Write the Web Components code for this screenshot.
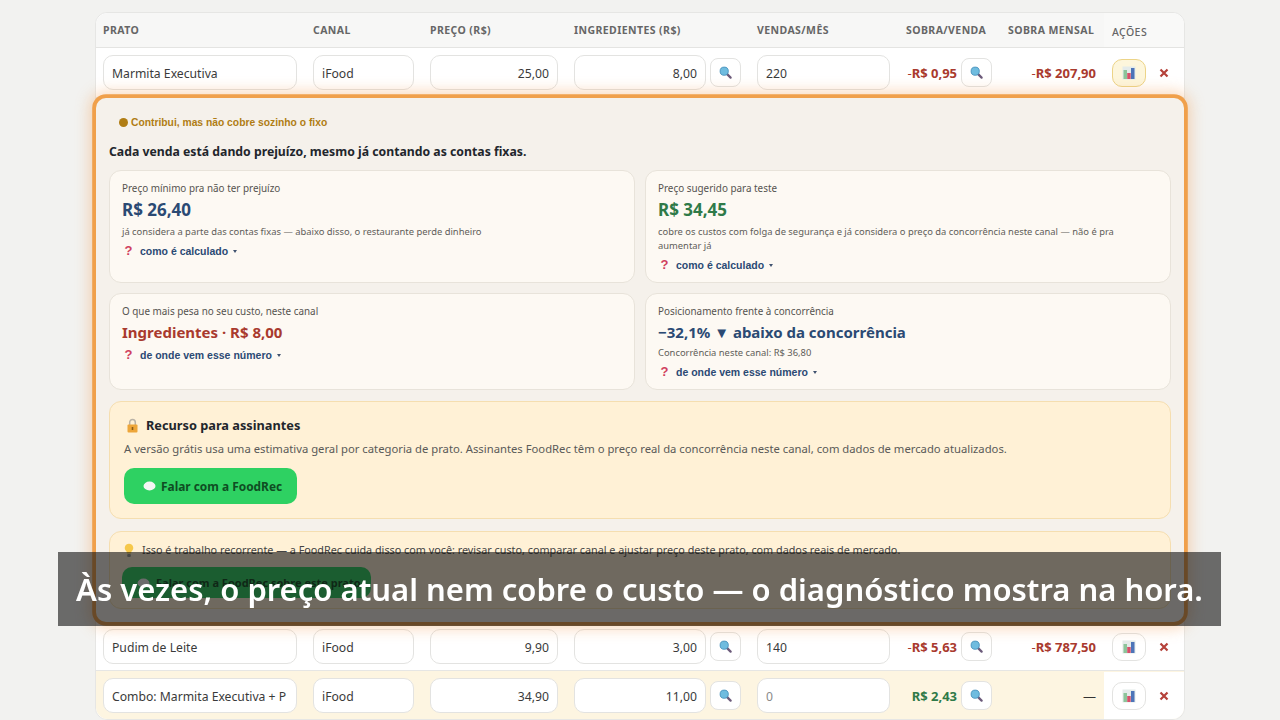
<!DOCTYPE html>
<html lang="pt-BR">
<head>
<meta charset="utf-8">
<title>FoodRec</title>
<style>
    html, body { margin: 0; height: 720px; overflow: hidden; background: #f2f2f0; }
    body { font-family: "Noto Sans", "Open Sans", sans-serif; color: #2b2b2b; }
</style>
</head>
<body>
<food-page>
    <food-table>
        <food-header></food-header>
        <food-row prato="Marmita Executiva" preco="25,00" ingredientes="8,00" vendas="220" sobra="-|R$ 0,95" mensal="-|R$ 207,90" ativo></food-row>
        <food-panel>
            <span slot="selo">Contribui, mas não cobre sozinho o fixo</span>
            <span slot="titulo">Cada venda está dando prejuízo, mesmo já contando as contas fixas.</span>
            <info-card grande rotulo="Preço mínimo pra não ter prejuízo" valor="R$ 26,40" cor="#2b4a73" ajuda="como é calculado">
                já considera a parte das contas fixas — abaixo disso, o restaurante perde dinheiro
            </info-card>
            <info-card grande rotulo="Preço sugerido para teste" valor="R$ 34,45" cor="#2f7a48" ajuda="como é calculado">
                cobre os custos com folga de segurança e já considera o preço da concorrência neste canal — não é pra aumentar já
            </info-card>
            <info-card rotulo="O que mais pesa no seu custo, neste canal" valor="Ingredientes · R$ 8,00" cor="#a93a2e" ajuda="de onde vem esse número"></info-card>
            <info-card rotulo="Posicionamento frente à concorrência" valor="−32,1% ▼ abaixo da concorrência" cor="#2b4a73" ajuda="de onde vem esse número">
                Concorrência neste canal: R$ 36,80
            </info-card>
            <promo-box slot="extras" titulo="Recurso para assinantes" botao="Falar com a FoodRec">
                A versão grátis usa uma estimativa geral por categoria de prato. Assinantes FoodRec têm o preço real da concorrência neste canal, com dados de mercado atualizados.
            </promo-box>
            <work-box slot="extras" botao="Falar com a FoodRec sobre este prato">
                Isso é trabalho recorrente — a FoodRec cuida disso com você: revisar custo, comparar canal e ajustar preço deste prato, com dados reais de mercado.
            </work-box>
        </food-panel>
        <food-row prato="Pudim de Leite" preco="9,90" ingredientes="3,00" vendas="140" sobra="-|R$ 5,63" mensal="-|R$ 787,50"></food-row>
        <food-row prato="Combo: Marmita Executiva + P" preco="34,90" ingredientes="11,00" vendas="0" sobra="|R$ 2,43" mensal="—" combo></food-row>
    </food-table>
    <food-caption>Às vezes, o preço atual nem cobre o custo — o diagnóstico mostra na hora.</food-caption>
</food-page>

<script>
// Icones desenhados a mao, parecidos com os emojis do original
const ICONE_LUPA = `<svg width="13" height="13" viewBox="0 0 14 14"><path d="M8.5 8.5 L12.5 12.5" stroke="#6b5a7a" stroke-width="2.4" stroke-linecap="round"/><circle cx="5.6" cy="5.6" r="4.4" fill="#6fbcdf" stroke="#4a93bd" stroke-width="1"/></svg>`;
const ICONE_GRAFICO = `<svg width="14" height="14" viewBox="0 0 14 14"><rect x="0.5" y="0.5" width="13" height="13" fill="#e4ebea"/><rect x="1.5" y="4" width="3.5" height="9" fill="#8cc49a"/><rect x="5.2" y="7" width="3.5" height="6" fill="#d8506a"/><rect x="9" y="2" width="3.5" height="11" fill="#4d74b8"/></svg>`;
const ICONE_X = `<svg width="10" height="10" viewBox="0 0 10 10"><path d="M1.5 1.5 L8.5 8.5 M8.5 1.5 L1.5 8.5" stroke="#b5413a" stroke-width="2.2"/></svg>`;
const ICONE_CADEADO = `<svg width="11" height="15" viewBox="0 0 11 15"><path d="M2.7 7 V4.3 a2.8 2.8 0 0 1 5.6 0 V7" fill="none" stroke="#b9b2a6" stroke-width="1.5"/><rect x="0.5" y="6.5" width="10" height="8" rx="1" fill="#eda63a"/><rect x="4.7" y="9" width="1.6" height="3" fill="#8a5a16"/></svg>`;
const ICONE_LAMPADA = `<svg width="10" height="15" viewBox="0 0 10 15"><path d="M5 .8 a4.2 4.2 0 0 1 2.6 7.5 L7 10.5 H3 L2.4 8.3 A4.2 4.2 0 0 1 5 .8z" fill="#f6c84a"/><rect x="3.2" y="11" width="3.6" height="3" rx="1" fill="#9a9a92"/></svg>`;
const ICONE_BALAO = `<svg width="13" height="10" viewBox="0 0 13 10"><ellipse cx="6.5" cy="5" rx="6" ry="4.4" fill="#f4f6f4"/></svg>`;

const COLUNAS = "194px 101px 128px 167px 133px 86px 88px 1fr";

// Campo que parece um input
class CampoTexto extends HTMLElement {
    constructor() {
        super();
        this.attachShadow({ mode: "open" });
        this.shadowRoot.innerHTML = `
            <style>
                :host { display: block; min-width: 0; flex: 1; }
                .campo {
                    height: 33px;
                    padding: 0 8px;
                    background: #fff;
                    border: 1px solid #e3e3e1;
                    border-radius: 10px;
                    font-size: 12.2px;
                    color: #3a3a3a;
                }
                .dentro { height: 33px; line-height: 35px; white-space: nowrap; overflow: hidden; }
                :host([direita]) .campo { text-align: right; }
                :host([vazio]) .campo { color: #8a8a8a; }
            </style>
            <div class="campo"><div class="dentro"><slot></slot></div></div>
        `;
    }
}

class BotaoIcone extends HTMLElement {
    constructor() {
        super();
        this.attachShadow({ mode: "open" });
        this.shadowRoot.innerHTML = `
            <style>
                :host { display: flex; flex: none; }
                .btn {
                    width: 29px;
                    height: 27px;
                    display: flex;
                    align-items: center;
                    justify-content: center;
                    background: #fff;
                    border: 1px solid #e3e3e1;
                    border-radius: 8px;
                }
                :host([largo]) .btn { width: 32px; height: 26px; border-radius: 10px; }
                :host([ativo]) .btn { background: #fdf6dc; border-color: #ecd488; }
            </style>
            <div class="btn"><slot></slot></div>
        `;
    }
}

class FoodHeader extends HTMLElement {
    constructor() {
        super();
        this.attachShadow({ mode: "open" });
        this.shadowRoot.innerHTML = `
            <style>
                :host {
                    display: grid;
                    grid-template-columns: ${COLUNAS};
                    column-gap: 16px;
                    padding-left: 7px;
                    height: 34px;
                    align-items: center;
                    background: #f7f7f6;
                    border-bottom: 1px solid #e4e4e2;
                    font-size: 10.5px;
                    font-weight: 700;
                    letter-spacing: .42px;
                    color: #666;
                    white-space: nowrap;
                    border-radius: 12px 12px 0 0;
                }
                .acoes {
                    font-weight: 500;
                    align-self: stretch;
                    display: flex;
                    align-items: center;
                    padding: 3px 0 0 8px;
                    margin-left: -8px;
                    background: #f9f9f8;
                    border-top-right-radius: 12px;
                }
            </style>
            <div>PRATO</div><div>CANAL</div><div>PREÇO (R$)</div><div>INGREDIENTES (R$)</div>
            <div>VENDAS/MÊS</div><div>SOBRA/VENDA</div><div>SOBRA MENSAL</div><div class="acoes">AÇÕES</div>
        `;
    }
}

class FoodRow extends HTMLElement {
    constructor() {
        super();
        this.attachShadow({ mode: "open" });
        this.shadowRoot.innerHTML = `
            <style>
                :host {
                    display: grid;
                    grid-template-columns: ${COLUNAS};
                    column-gap: 16px;
                    padding-left: 7px;
                    height: 47px;
                    align-items: center;
                    background: #fff;
                    border-bottom: 1px solid #e6e6e4;
                }
                :host([ativo]) { padding: 1px 0 1px 7px; }
                :host([combo]) { background: #fdf5e1; border-bottom: 0; padding-top: 1px; border-radius: 0 0 12px 12px; }
                .par { display: flex; align-items: center; gap: 4px; min-width: 0; }
                .valor { font-size: 13px; font-weight: 700; white-space: nowrap; flex: 1; text-align: right; color: #a93a2e; }
                .valor.positivo { color: #2f7a48; }
                .valor i { font-style: normal; font-weight: 400; }
                .acoes {
                    display: flex;
                    align-items: center;
                    gap: 13px;
                    background: #fff;
                    align-self: stretch;
                    margin-left: -8px;
                    padding-left: 8px;
                    border-bottom-right-radius: 12px;
                }
                .x { display: flex; }
            </style>
            <campo-texto id="prato"></campo-texto>
            <campo-texto>iFood</campo-texto>
            <campo-texto id="preco" direita></campo-texto>
            <div class="par"><campo-texto id="ing" direita></campo-texto><botao-icone>${ICONE_LUPA}</botao-icone></div>
            <campo-texto id="vendas"></campo-texto>
            <div class="par"><div class="valor" id="sobra"></div><botao-icone>${ICONE_LUPA}</botao-icone></div>
            <div class="valor" id="mensal"></div>
            <div class="acoes"><botao-icone largo id="graf">${ICONE_GRAFICO}</botao-icone><span class="x">${ICONE_X}</span></div>
        `;
    }

    connectedCallback() {
        const raiz = this.shadowRoot;
        raiz.querySelector("#prato").textContent = this.getAttribute("prato");
        raiz.querySelector("#preco").textContent = this.getAttribute("preco");
        raiz.querySelector("#ing").textContent = this.getAttribute("ingredientes");
        const vendas = raiz.querySelector("#vendas");
        vendas.textContent = this.getAttribute("vendas");
        if (this.getAttribute("vendas") === "0") vendas.setAttribute("vazio", "");
        this.preencherValor(raiz.querySelector("#sobra"), this.getAttribute("sobra"));
        this.preencherValor(raiz.querySelector("#mensal"), this.getAttribute("mensal"));
        if (this.hasAttribute("ativo")) raiz.querySelector("#graf").setAttribute("ativo", "");
    }

    // "-|R$ 0,95": o sinal fica mais fino que o numero
    preencherValor(el, texto) {
        if (texto === "—") {
            el.innerHTML = `<i style="color:#333">—</i>`;
            return;
        }
        const [sinal, numero] = texto.split("|");
        if (!sinal) el.classList.add("positivo");
        el.innerHTML = `<i>${sinal}</i>${numero}`;
    }
}

class FoodPanel extends HTMLElement {
    constructor() {
        super();
        this.attachShadow({ mode: "open" });
        this.shadowRoot.innerHTML = `
            <style>
                :host {
                    display: block;
                    position: relative;
                    z-index: 1;
                    margin: 0 0 1px;
                    height: 524px;
                    padding: 0 13px;
                    background: #f5f1eb;
                    border-radius: 10px;
                    box-shadow: 0 0 0 3.8px #f0a04b, 0 0 14px 7px rgba(243, 160, 90, .38);
                }
                .selo {
                    display: flex;
                    align-items: center;
                    gap: 3px;
                    padding: 18px 0 0 10px;
                    font: 700 10.3px "Liberation Sans", sans-serif;
                    color: #b07d14;
                    line-height: 13px;
                }
                .selo::before { content: ""; width: 9px; height: 9px; border-radius: 50%; background: #b07d14; }
                .titulo { margin: 14px 0 9px; font-size: 12.25px; line-height: 18px; font-weight: 700; color: #22262c; }
                .grade { display: grid; grid-template-columns: 1fr 1fr; grid-template-rows: 113px 97px; gap: 10px; }
                .extras { display: flex; flex-direction: column; gap: 12px; margin-top: 11px; }
            </style>
            <div class="selo"><slot name="selo"></slot></div>
            <div class="titulo"><slot name="titulo"></slot></div>
            <div class="grade"><slot></slot></div>
            <div class="extras"><slot name="extras"></slot></div>
        `;
    }
}

class InfoCard extends HTMLElement {
    constructor() {
        super();
        this.attachShadow({ mode: "open" });
        this.shadowRoot.innerHTML = `
            <style>
                :host {
                    display: block;
                    box-sizing: border-box;
                    padding: 10px 12px;
                    background: #fdf9f3;
                    border: 1px solid #e8e3da;
                    border-radius: 12px;
                }
                .rotulo { font-size: 9.9px; line-height: 14px; color: #55534f; }
                .valor { font-size: 15px; line-height: 21px; margin-top: 4px; font-weight: 700; }
                :host([grande]) .valor { font-size: 17px; }
                .nota { font-size: 9.4px; line-height: 14px; color: #5f5d59; margin: 3px 0 2px; }
                :host([grande]) .nota { margin: 5px 0 0; }
                .ajuda {
                    display: flex;
                    align-items: center;
                    font: 700 10.5px/14px "Liberation Sans", sans-serif;
                    color: #2b4a73;
                    margin-top: 5px;
                }
                .q { color: #d0405e; font-size: 13px; width: 13px; margin-right: 5px; text-align: center; }
                .seta { margin-left: 5px; width: 0; height: 0; border: 2.5px solid transparent; border-top: 3px solid #40536f; border-bottom: 0; }
            </style>
            <div class="rotulo"></div>
            <div class="valor"></div>
            <div class="nota"><slot></slot></div>
            <div class="ajuda"><span class="q">?</span><span class="txt"></span><span class="seta"></span></div>
        `;
    }

    connectedCallback() {
        const raiz = this.shadowRoot;
        raiz.querySelector(".rotulo").textContent = this.getAttribute("rotulo");
        const valor = raiz.querySelector(".valor");
        valor.textContent = this.getAttribute("valor");
        valor.style.color = this.getAttribute("cor");
        raiz.querySelector(".txt").textContent = this.getAttribute("ajuda");
        if (!this.textContent.trim()) raiz.querySelector(".nota").style.display = "none";
    }
}

class PromoBox extends HTMLElement {
    constructor() {
        super();
        this.attachShadow({ mode: "open" });
        this.shadowRoot.innerHTML = `
            <style>
                :host {
                    display: block;
                    box-sizing: border-box;
                    height: 118px;
                    padding: 14px 14px;
                    background: #fff1d6;
                    border: 1px solid #f5deb0;
                    border-radius: 12px;
                }
                .titulo { display: flex; align-items: center; gap: 8px; font-size: 12.75px; line-height: 18px; font-weight: 700; color: #22262c; padding-left: 3px; }
                .texto { font-size: 11.27px; line-height: 16px; color: #5a5a58; margin-top: 7px; white-space: nowrap; }
                .botao {
                    display: inline-flex;
                    align-items: center;
                    gap: 5px;
                    height: 36px;
                    margin-top: 11px;
                    padding: 0 15px 0 19px;
                    background: #2ed162;
                    border-radius: 10px;
                    font-size: 11.9px;
                    font-weight: 700;
                    color: #0f4d22;
                }
            </style>
            <div class="titulo">${ICONE_CADEADO}<span id="t"></span></div>
            <div class="texto"><slot></slot></div>
            <div class="botao">${ICONE_BALAO}<span id="b"></span></div>
        `;
    }

    connectedCallback() {
        this.shadowRoot.querySelector("#t").textContent = this.getAttribute("titulo");
        this.shadowRoot.querySelector("#b").textContent = this.getAttribute("botao");
    }
}

class WorkBox extends HTMLElement {
    constructor() {
        super();
        this.attachShadow({ mode: "open" });
        this.shadowRoot.innerHTML = `
            <style>
                :host {
                    display: block;
                    box-sizing: border-box;
                    height: 78px;
                    padding: 10px 12px;
                    background: #fff1d6;
                    border: 1px solid #f5deb0;
                    border-radius: 12px;
                }
                .texto { display: flex; align-items: center; gap: 8px; font-size: 10.8px; line-height: 16px; color: #444; white-space: nowrap; padding-left: 2px; }
                .botao {
                    display: inline-flex;
                    align-items: center;
                    gap: 6px;
                    height: 31px;
                    margin-top: 9px;
                    padding: 0 10px 0 15px;
                    background: #2ed162;
                    border-radius: 10px;
                    font-size: 11px;
                    font-weight: 700;
                    color: #0f4d22;
                }
            </style>
            <div class="texto">${ICONE_LAMPADA}<span><slot></slot></span></div>
            <div class="botao">${ICONE_BALAO}<span id="b"></span></div>
        `;
    }

    connectedCallback() {
        this.shadowRoot.querySelector("#b").textContent = this.getAttribute("botao");
    }
}

class FoodTable extends HTMLElement {
    constructor() {
        super();
        this.attachShadow({ mode: "open" });
        this.shadowRoot.innerHTML = `
            <style>
                :host {
                    display: block;
                    background: #fff;
                    border: 1px solid #e6e6e4;
                    border-radius: 12px;
                }
            </style>
            <slot></slot>
        `;
    }
}

class FoodPage extends HTMLElement {
    constructor() {
        super();
        this.attachShadow({ mode: "open" });
        this.shadowRoot.innerHTML = `
            <style>
                :host { display: block; padding: 12px 95px 0; }
            </style>
            <slot></slot>
        `;
    }
}

class FoodCaption extends HTMLElement {
    constructor() {
        super();
        this.attachShadow({ mode: "open" });
        this.shadowRoot.innerHTML = `
            <style>
                :host {
                    position: fixed;
                    z-index: 5;
                    left: 58px;
                    top: 552px;
                    width: 1163px;
                    height: 74px;
                    display: flex;
                    align-items: center;
                    justify-content: center;
                    background: rgba(15, 15, 15, .6);
                    color: #fff;
                    font-size: 31px;
                    font-weight: 600;
                    white-space: nowrap;
                }
            </style>
            <slot></slot>
        `;
    }
}

customElements.define("campo-texto", CampoTexto);
customElements.define("botao-icone", BotaoIcone);
customElements.define("food-header", FoodHeader);
customElements.define("food-row", FoodRow);
customElements.define("food-panel", FoodPanel);
customElements.define("info-card", InfoCard);
customElements.define("promo-box", PromoBox);
customElements.define("work-box", WorkBox);
customElements.define("food-table", FoodTable);
customElements.define("food-page", FoodPage);
customElements.define("food-caption", FoodCaption);
</script>
</body>
</html>
